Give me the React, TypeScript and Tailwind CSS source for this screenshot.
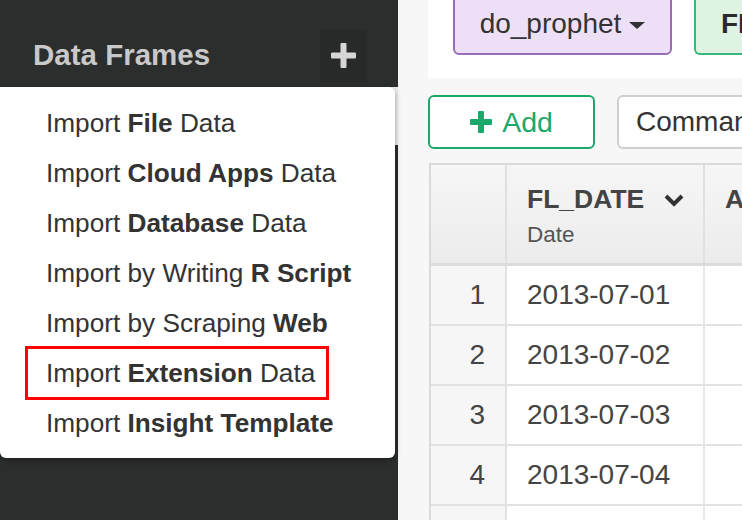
import React from 'react';

const MENU_ITEMS: { pre: string; bold: string; post?: string }[] = [
  { pre: 'Import ', bold: 'File', post: ' Data' },
  { pre: 'Import ', bold: 'Cloud Apps', post: ' Data' },
  { pre: 'Import ', bold: 'Database', post: ' Data' },
  { pre: 'Import by Writing ', bold: 'R Script' },
  { pre: 'Import by Scraping ', bold: 'Web' },
  { pre: 'Import ', bold: 'Extension', post: ' Data' },
  { pre: 'Import ', bold: 'Insight Template' },
];

const ROWS = ['2013-07-01', '2013-07-02', '2013-07-03', '2013-07-04', ''];

function PlusIcon({ size, color, bar }: { size: number; color: string; bar: number }) {
  const off = (size - bar) / 2;
  return (
    <svg width={size} height={size} viewBox={`0 0 ${size} ${size}`}>
      <rect x={off} y={0} width={bar} height={size} rx={1} fill={color} />
      <rect x={0} y={off} width={size} height={bar} rx={1} fill={color} />
    </svg>
  );
}

export default function App() {
  return (
    <div className="relative flex h-[520px] w-[742px] overflow-hidden font-['Liberation_Sans',Arial,sans-serif]">
      {/* sidebar */}
      <aside className="w-[398px] shrink-0 bg-[#2c2d2d]">
        <div className="flex h-[87px] items-center justify-between pb-[2px] pl-[33px] pr-[31px] pt-[25px]">
          <span className="text-[29.5px] font-bold text-[#c9c9c9]">Data Frames</span>
          <button className="flex h-[53px] w-[47px] items-center justify-center rounded-sm bg-[#282929]">
            <PlusIcon size={25} bar={6} color="#d6d6d6" />
          </button>
        </div>
        <div className="h-[58px] bg-[#ededed]" />
      </aside>

      {/* main */}
      <main className="flex-1 bg-[#f7f7f7] pl-[30px]">
        <div className="flex h-[78px] items-start bg-white pl-[25px]">
          <div className="-mt-[8px] flex h-[63px] w-[219px] items-center justify-center gap-[8px] rounded-md border-2 border-[#9a6bb6] bg-[#ede0f6] pt-[1px] text-[28px] text-[#333]">
            do_prophet
            <span className="mt-[2px] h-0 w-0 border-x-[8px] border-t-[7px] border-x-transparent border-t-[#333]" />
          </div>
          <div className="-mt-[8px] ml-[22px] flex h-[63px] flex-1 items-center rounded-l-md border-y-2 border-l-2 border-[#3bb67d] bg-[#dff3e3] pl-[25px] text-[28px] font-bold text-[#2a2a2a]">
            FL_DATE
          </div>
        </div>

        <div className="mt-[17px] flex gap-[22px]">
          <button className="flex h-[54px] w-[167px] items-center justify-center gap-[10px] rounded-md border-2 border-[#1aa86b] bg-white text-[28.5px] text-[#1aa86b]">
            <PlusIcon size={22} bar={6} color="#1aa86b" />
            Add
          </button>
          <button className="flex h-[54px] flex-1 items-center rounded-l-md border-y-2 border-l-2 border-[#cfcfcf] bg-white pl-[17px] text-[28px] text-[#333]">
            Command
          </button>
        </div>

        <div className="ml-[1px] mt-[14px] border-l-2 border-t-2 border-[#dadada] text-[#444]">
          <div className="grid h-[101px] grid-cols-[76px_198px_1fr] border-b-[3px] border-[#dcdcdc] bg-gradient-to-b from-[#f6f6f6] to-[#ececec]">
            <div className="border-r-2 border-[#e0e0e0]" />
            <div className="flex flex-col justify-center border-r-2 border-[#e0e0e0] pl-[20px] pt-[4px]">
              <div className="flex items-center justify-between pr-[18px]">
                <span className="text-[26.5px] font-bold text-[#444]">FL_DATE</span>
                <svg width="22" height="14" viewBox="0 0 22 14">
                  <polyline points="3,3 11,11 19,3" fill="none" stroke="#333" strokeWidth="4" />
                </svg>
              </div>
              <span className="-mt-[2px] text-[22.5px] text-[#555]">Date</span>
            </div>
            <div className="flex flex-col justify-center pl-[20px] pt-[4px]">
              <span className="text-[26.5px] font-bold text-[#444]">AIRLINE</span>
              <span className="-mt-[2px] text-[22.5px] text-[#555]">&nbsp;</span>
            </div>
          </div>
          {ROWS.map((d, i) => (
            <div key={i} className="grid h-[60px] grid-cols-[76px_198px_1fr] border-b-2 border-[#e2e2e2] text-[28px]">
              <div className="flex items-center justify-end border-r-2 border-[#e2e2e2] bg-[#f6f6f6] pr-[20px]">
                {d ? i + 1 : ''}
              </div>
              <div className="flex items-center border-r-2 border-[#e8e8e8] bg-white pl-[20px]">{d}</div>
              <div className="bg-white" />
            </div>
          ))}
        </div>
      </main>

      {/* dropdown menu */}
      <div className="absolute left-0 top-[87px] h-[371px] w-[395px] rounded-r-md rounded-bl-md bg-white pb-[9px] pt-[12px] shadow-[0_2px_6px_rgba(0,0,0,0.35)]">
        {MENU_ITEMS.map((it, i) => (
          <div key={i} className="flex h-[50px] items-center whitespace-pre pl-[46px] text-[26.2px] text-[#333]">
            {it.pre}
            <b className="font-bold">{it.bold}</b>
            {it.post}
          </div>
        ))}
        <div className="absolute left-[25px] top-[259px] h-[54px] w-[304px] border-[3px] border-[#ff0000]" />
      </div>
    </div>
  );
}
